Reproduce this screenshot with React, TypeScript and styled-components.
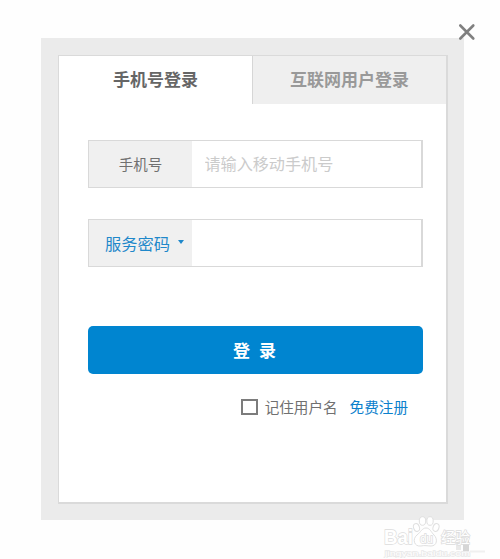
import React, { useState } from "react";
import styled, { createGlobalStyle } from "styled-components";

const GlobalStyle = createGlobalStyle`
  *, *::before, *::after { box-sizing: border-box; }
  body {
    margin: 0;
    background: #fefefe;
    font-family: "Noto Sans CJK SC", "Liberation Sans", sans-serif;
    color: #707070;
  }
  button, input { font-family: inherit; }
`;

const Page = styled.main`
  position: relative;
  width: 500px;
  height: 559px;
  padding: 38px 0 0 41px;
  overflow: hidden;
`;

const Frame = styled.section`
  width: 423px;
  height: 482px;
  padding: 17px;
  background: #ebebeb;
`;

const Panel = styled.div`
  width: 390px;
  height: 449px;
  border: 1px solid #dadada;
  border-width: 1px 2px 2px 1px;
  background: #fff;
`;

const Tabs = styled.div`
  display: flex;
  height: 48px;
`;

const Tab = styled.button<{ $active?: boolean }>`
  flex: ${(p) => (p.$active ? "0 0 193px" : "1")};
  padding: 0 0 2px;
  border: 0;
  border-left: ${(p) => (p.$active ? "0" : "1px solid #d6d6d6")};
  background: ${(p) => (p.$active ? "#fff" : "#efefef")};
  color: ${(p) => (p.$active ? "#666" : "#999")};
  font-size: 17px;
  font-weight: 700;
  line-height: 24px;
`;

const Form = styled.form`
  display: flex;
  flex-direction: column;
  margin: 36px 23px 0 29px;
`;

const Field = styled.div`
  display: flex;
  height: 48px;
  margin-bottom: 31px;
  border: 1px solid #d9d9d9;
  border-right-width: 2px;
`;

const FieldLabel = styled.div<{ $select?: boolean }>`
  display: flex;
  align-items: center;
  justify-content: center;
  gap: 8px;
  flex: 0 0 103px;
  padding: ${(p) => (p.$select ? "0 0 0 8px" : "0 0 2px")};
  background: #f0f0f0;
  color: ${(p) => (p.$select ? "#1f88ca" : "#707070")};
  font-size: ${(p) => (p.$select ? "16.3px" : "14.5px")};
`;

const Caret = styled.span`
  margin-top: -3px;
  border: 3.5px solid transparent;
  border-top: 4px solid #1f88ca;
  border-bottom: 0;
`;

const Input = styled.input`
  flex: 1;
  min-width: 0;
  padding: 0 12.5px 3px;
  border: 0;
  outline: 0;
  background: #fff;
  color: #707070;
  font-size: 16.1px;
  &::placeholder { color: #cbcbcb; opacity: 1; }
`;

const Submit = styled.button`
  height: 48px;
  margin-top: 28px;
  padding: 0 2px 2px 0;
  border: 0;
  border-radius: 5px;
  background: #0085d0;
  color: #fff;
  font-size: 17px;
  font-weight: 700;
  word-spacing: 5px;
`;

const Options = styled.div`
  display: flex;
  align-items: center;
  justify-content: flex-end;
  margin-top: 22px;
  padding-right: 15px;
  font-size: 14.6px;
  line-height: 22px;
`;

const Remember = styled.label`
  display: flex;
  align-items: center;
  gap: 7px;
  margin-right: 12px;
`;

const Checkbox = styled.input`
  appearance: none;
  width: 17px;
  height: 16px;
  margin: 0;
  border: 2px solid #7c7c7c;
  background: #fff;
`;

const Register = styled.a`
  color: #0b80cc;
  text-decoration: none;
`;

const Close = styled.button`
  position: absolute;
  top: 23px;
  left: 458px;
  width: 18px;
  height: 18px;
  padding: 0;
  border: 0;
  background: none;
  svg { display: block; }
`;

const Watermark = styled.div`
  position: absolute;
  top: 515px;
  left: 383px;
  width: 105px;
  height: 43px;
  svg { display: block; }
`;

export default function App() {
  const [phone, setPhone] = useState("");
  const [password, setPassword] = useState("");
  return (
    <>
      <GlobalStyle />
      <Page>
        <Frame>
          <Panel>
            <Tabs>
              <Tab $active>手机号登录</Tab>
              <Tab>互联网用户登录</Tab>
            </Tabs>
            <Form onSubmit={(e) => e.preventDefault()}>
              <Field>
                <FieldLabel>手机号</FieldLabel>
                <Input
                  placeholder="请输入移动手机号"
                  value={phone}
                  onChange={(e) => setPhone(e.target.value)}
                />
              </Field>
              <Field>
                <FieldLabel $select>
                  服务密码
                  <Caret />
                </FieldLabel>
                <Input
                  type="password"
                  value={password}
                  onChange={(e) => setPassword(e.target.value)}
                />
              </Field>
              <Submit>登 录</Submit>
              <Options>
                <Remember>
                  <Checkbox type="checkbox" />
                  记住用户名
                </Remember>
                <Register href="#">免费注册</Register>
              </Options>
            </Form>
          </Panel>
        </Frame>
        <Close aria-label="关闭">
          <svg width="18" height="18" viewBox="0 0 18 18">
            <path d="M2.300 2.500 15.300 15.500M15.300 2.500 2.300 15.500" stroke="#808080" strokeWidth="2.600" strokeLinecap="round" />
          </svg>
        </Close>
        <Watermark>
          <svg width="105" height="43" viewBox="0 0 105 43">
            <rect x="73" y="25" width="5" height="10" fill="#e9e9e9" />
            <rect x="80" y="24" width="6" height="12" fill="#d6d6d6" />
            <g fill="#fff" stroke="#e0e0e0" strokeWidth="1">
              <ellipse cx="33.500" cy="12.500" rx="2.900" ry="4" transform="rotate(-20 33.500 12.500)" />
              <ellipse cx="39.500" cy="6" rx="3.200" ry="4.300" />
              <ellipse cx="47" cy="6" rx="3.200" ry="4.300" />
              <ellipse cx="53" cy="12.500" rx="2.900" ry="4" transform="rotate(20 53 12.500)" />
              <path d="M43 13c4 0 5 4 8 7 4 4 3 11-3 11-3 0-7-1-10 0-7 1-9-7-4-11 4-3 5-7 9-7Z" />
            </g>
            <g fill="#fff" stroke="#dcdcdc" strokeWidth="1.400" paintOrder="stroke" fontFamily="Liberation Sans, Noto Sans CJK SC, sans-serif">
              <text x="1" y="28.500" fontSize="20" fontWeight="700" textLength="29" lengthAdjust="spacingAndGlyphs">Bai</text>
              <text x="37" y="28" fontSize="12" textLength="13">du</text>
              <text x="58" y="28" fontSize="14.500" textLength="29">经验</text>
              <text x="2" y="40.500" fontSize="8" textLength="85" lengthAdjust="spacingAndGlyphs" stroke="#e8e8e8">jingyan.baidu.com</text>
            </g>
            <path d="M87 36.500h15" stroke="#f0f0f0" strokeWidth="2" />
          </svg>
        </Watermark>
      </Page>
    </>
  );
}
